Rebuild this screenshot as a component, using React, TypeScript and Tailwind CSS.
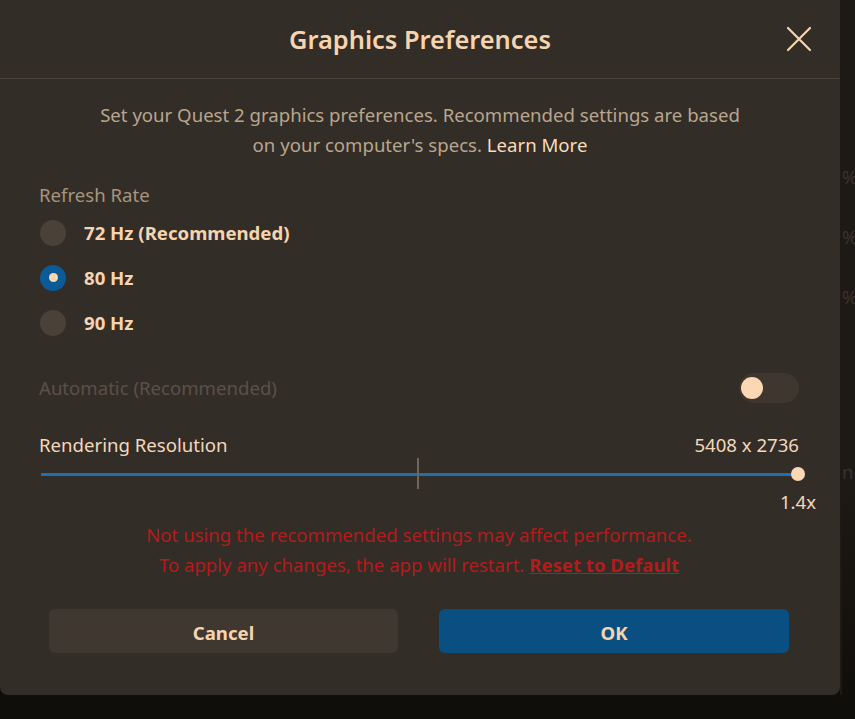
import React, { useState } from 'react';

const peach = 'text-[#f6d4b0]';

const RadioRow: React.FC<{ label: string; checked: boolean; onClick: () => void }> = ({ label, checked, onClick }) => (
  <button onClick={onClick} className="flex h-[45px] items-center gap-[18px] pl-[1px] text-left">
    <span
      className={
        checked
          ? 'flex h-[26px] w-[26px] items-center justify-center rounded-full bg-[#0b5b96]'
          : 'h-[26px] w-[26px] rounded-full bg-[#4a4139]'
      }
    >
      {checked && <span className="h-[9px] w-[9px] rounded-full bg-[#fbd8b3]" />}
    </span>
    <span className={`text-[18.6px] font-bold ${peach}`}>{label}</span>
  </button>
);

export default function App() {
  const [rate, setRate] = useState('80');

  return (
    <div
      className="flex h-[719px] w-[855px] flex-col overflow-hidden bg-[#100e0b]"
      style={{ fontFamily: '"Noto Sans", "Open Sans", sans-serif' }}
    >
      <div className="flex h-[695px]">
        {/* dialog */}
        <div className="flex h-[695px] w-[840px] flex-col rounded-b-lg bg-[#332d27]">
          <div className="relative flex h-[79px] items-center justify-center border-b border-[#4a4139]">
            <h1 className={`text-[25.4px] font-semibold ${peach}`}>Graphics Preferences</h1>
            <button className="absolute right-[28px] top-[26px] text-[#f6d4b0]">
              <svg width="26" height="26" viewBox="0 0 26 26" fill="none" stroke="currentColor" strokeWidth="2.2" strokeLinecap="round">
                <path d="M2 2 L24 24 M24 2 L2 24" />
              </svg>
            </button>
          </div>

          <p className="mt-[21px] text-center text-[18.6px] leading-[30px] text-[#b9a68f]">
            Set your Quest 2 graphics preferences. Recommended settings are based
            <br />
            on your computer's specs. <span className="text-[#f8dcbc]">Learn More</span>
          </p>

          <div className="flex flex-col pl-[39px] pr-[41px]">
            <div className="mt-[20px] text-[18.6px] leading-[30px] text-[#a8947e]">Refresh Rate</div>
            <RadioRow label="72 Hz (Recommended)" checked={rate === '72'} onClick={() => setRate('72')} />
            <RadioRow label="80 Hz" checked={rate === '80'} onClick={() => setRate('80')} />
            <RadioRow label="90 Hz" checked={rate === '90'} onClick={() => setRate('90')} />

            <div className="mt-[28px] flex h-[30px] items-center justify-between">
              <span className="text-[18.6px] text-[#5b5047]">Automatic (Recommended)</span>
              <div className="flex h-[30px] w-[60px] items-center rounded-full bg-[#3f372f] pl-[2px]">
                <div className="h-[22px] w-[22px] rounded-full bg-[#fbd8b3]" />
              </div>
            </div>

            <div className="mt-[27px] flex h-[30px] items-center justify-between text-[18.6px] text-[#f3d8bd]">
              <span>Rendering Resolution</span>
              <span>5408 x 2736</span>
            </div>

            {/* slider */}
            <div className="relative flex h-[28px] items-center pl-[2px]">
              <div className="h-[3px] flex-1 bg-[#1f6fb1]" />
              <div className="absolute left-[378px] top-[-2px] h-[31px] w-[2px] bg-[#6e655c]" />
              <div className="absolute right-[-6px] top-[7px] h-[14px] w-[14px] rounded-full bg-[#fbd8b3]" />
            </div>
            <div className="-mr-[17px] flex h-[28px] items-center justify-end text-[18.6px] text-[#f3d8bd]">1.4x</div>

            <p className="mt-[4px] text-center text-[18.6px] leading-[30px] text-[#b21c1c]">
              Not using the recommended settings may affect performance.
              <br />
              To apply any changes, the app will restart.{' '}
              <span className="font-bold underline">Reset to Default</span>
            </p>

            <div className="mt-[29px] flex gap-[41px] pl-[10px] pr-[10px]">
              <button className={`h-[44px] w-[349px] rounded-md bg-[#3f3730] pt-[3px] text-[18.6px] font-bold ${peach}`}>Cancel</button>
              <button className={`h-[44px] w-[350px] rounded-md bg-[#0a4f82] pt-[3px] text-[18.6px] font-bold ${peach}`}>OK</button>
            </div>
          </div>
        </div>

        {/* page behind */}
        <div className="flex w-[15px] flex-col overflow-hidden bg-[#1d1915] pl-[2px] text-[18.6px] text-[#3a332c]">
          <span className="mt-[164px] leading-[26px]">%</span>
          <span className="mt-[34px] leading-[26px]">%</span>
          <span className="mt-[34px] leading-[26px]">%</span>
          <span className="mt-[149px] leading-[26px]">ne</span>
          <div className="flex-1 bg-gradient-to-b from-[#1d1915] to-[#100e0b]" />
        </div>
      </div>
      <div className="flex-1" />
    </div>
  );
}
